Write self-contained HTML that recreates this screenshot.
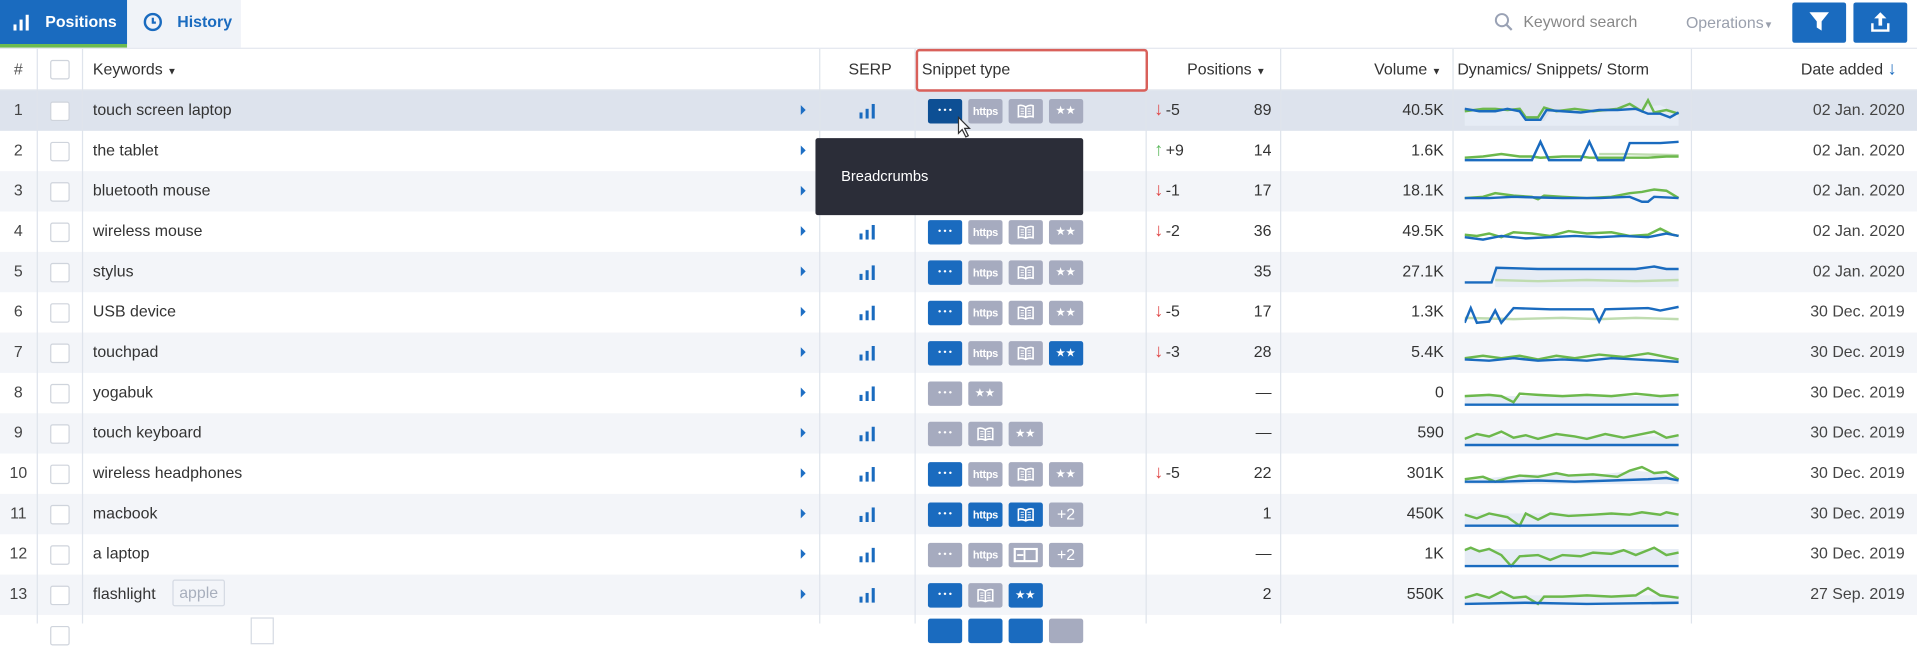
<!DOCTYPE html>
<html><head><meta charset="utf-8"><style>
html,body{margin:0;padding:0;width:1917px;height:623px;overflow:hidden;background:#fff;font-family:"Liberation Sans",Arial,sans-serif}
#w{position:absolute;left:0;top:0;width:1568px;height:510px;transform:scale(1.22258);transform-origin:0 0;color:#333;font-size:13px}
.a{position:absolute}
.vl{position:absolute;top:40px;width:1px;height:470px;background:#dfe4ec}
.r{position:absolute;left:0;width:1568px;height:33px}
.r.g{background:#f3f5f9}
.r.s{background:#dde3ed}
.c{position:absolute;top:0;height:33px;line-height:32px;white-space:nowrap}
.num{left:0;width:30px;text-align:center;color:#444}
.cb{position:absolute;left:41px;top:9px;width:14px;height:14px;border:1px solid #cfd4dc;border-radius:2px;background:#fff}
.kw{left:76px;color:#333}
.tri{position:absolute;left:655px;top:12px;width:0;height:0;border-left:4px solid #1e6fc4;border-top:4px solid transparent;border-bottom:4px solid transparent}
.serp{position:absolute;left:703px;top:11px}
.b{position:absolute;top:7px;width:28px;height:20px;border-radius:2px;background:#a6abbf;color:#fff;text-align:center;line-height:20px;font-weight:bold;font-size:9px}
.b.u{background:#1a6bbf}
.b.d{background:#0d4f94}
.dt{letter-spacing:0px;font-size:7px}
.hs{font-size:9px;letter-spacing:-0.3px}
.st{font-size:8px;letter-spacing:1px}
.p2{font-size:13px;font-weight:normal}
.bk svg{margin-top:4px}
.chg{left:944px}
.arr{display:inline-block;font-size:15px;margin-right:2px}
.dn{color:#e04848}
.up{color:#5cb85c}
.pos{left:950px;width:90px;text-align:right}
.vol{left:1050px;width:131px;text-align:right}
.date{left:1390px;width:168px;text-align:right;color:#444}
.sp{position:absolute;left:1198px;top:5px}
.h{position:absolute;top:40px;height:34px;line-height:34px;font-size:13px;color:#333}
</style></head><body><div id="w">
<svg width="0" height="0" style="position:absolute"><defs><symbol id="bk" viewBox="0 0 14 12"><path d="M7,2.5 Q4,0.5 1,1.5 V10.5 Q4,9.5 7,11 Q10,9.5 13,10.5 V1.5 Q10,0.5 7,2.5Z M7,2.5 V11" fill="none" stroke="#fff" stroke-width="1.3"/><path d="M2.8,4 H5.5 M2.8,6 H5.5 M2.8,8 H5.5 M8.5,4 H11.2 M8.5,6 H11.2 M8.5,8 H11.2" stroke="#fff" stroke-width="0.8"/></symbol></defs></svg>

<!-- top bar -->
<div class="a" style="left:0;top:0;width:104px;height:36px;background:#1a6bbf"></div>
<div class="a" style="left:0;top:36px;width:104px;height:3px;background:#6dbb4f"></div>
<svg class="a" style="left:11px;top:12px" width="14" height="13"><rect x="0" y="8" width="2.5" height="5" fill="#fff"/><rect x="5" y="4" width="2.5" height="9" fill="#fff"/><rect x="10" y="0" width="2.5" height="13" fill="#fff"/></svg>
<div class="a" style="left:37px;top:10px;color:#fff;font-weight:bold;font-size:13px">Positions</div>
<div class="a" style="left:104px;top:0;width:93px;height:39px;background:#f0f3f8"></div>
<svg class="a" style="left:117px;top:10px" width="16" height="16"><circle cx="8" cy="8" r="6.5" fill="none" stroke="#1a6bbf" stroke-width="2"/><path d="M8 4.5V8.5H10.5" fill="none" stroke="#1a6bbf" stroke-width="1.8"/></svg>
<div class="a" style="left:145px;top:10px;color:#1a6bbf;font-weight:bold;font-size:13px">History</div>
<div class="a" style="left:0;top:39px;width:1568px;height:1px;background:#e3e7ee"></div>
<svg class="a" style="left:1222px;top:10px" width="16" height="16"><circle cx="6.5" cy="6.5" r="5" fill="none" stroke="#9aa2b5" stroke-width="1.6"/><path d="M10 10L14.5 14.5" stroke="#9aa2b5" stroke-width="1.8"/></svg>
<div class="a" style="left:1246px;top:10px;color:#888;font-size:13px">Keyword search</div>
<div class="a" style="left:1379px;top:11px;color:#9aa0ad;font-size:13px">Operations<span style="font-size:8px">▼</span></div>
<div class="a" style="left:1466px;top:2px;width:44px;height:33px;background:#1a6bbf;border-radius:2px"></div>
<svg class="a" style="left:1479px;top:9px" width="18" height="18"><path d="M1 1H17L11 8.5V16L7 13.5V8.5Z" fill="#fff"/></svg>
<div class="a" style="left:1516px;top:2px;width:44px;height:33px;background:#1a6bbf;border-radius:2px"></div>
<svg class="a" style="left:1530px;top:9px" width="16" height="18"><path d="M8 1L3 6H6.5V12H9.5V6H13Z" fill="#fff"/><path d="M1.5 10V16H14.5V10" fill="none" stroke="#fff" stroke-width="2"/></svg>

<!-- header -->
<div class="h" style="left:0;width:30px;text-align:center;color:#555">#</div>
<div class="cb" style="top:49px"></div>
<div class="h" style="left:76px">Keywords <span style="font-size:8px">▼</span></div>
<div class="h" style="left:694px">SERP</div>
<div class="h" style="left:754px">Snippet type</div>
<div class="h" style="left:971px">Positions <span style="font-size:8px">▼</span></div>
<div class="h" style="left:1124px">Volume <span style="font-size:8px">▼</span></div>
<div class="h" style="left:1192px">Dynamics/ Snippets/ Storm</div>
<div class="h" style="left:1473px">Date added <span style="color:#1a6bbf;font-size:15px">↓</span></div>
<div class="a" style="left:0;top:73px;width:1568px;height:1px;background:#e3e7ee"></div>

<!-- rows -->
<div class="r s" style="top:74px"><div class="c num">1</div><div class="cb"></div><div class="c kw">touch screen laptop</div><div class="tri"></div><svg class="serp" width="14" height="12"><rect x="0" y="7" width="2.5" height="5" fill="#1a6bbf"/><rect x="5" y="4" width="2.5" height="8" fill="#1a6bbf"/><rect x="10" y="0" width="2.5" height="12" fill="#1a6bbf"/></svg>
<div class="b d dt" style="left:759px">• • •</div><div class="b hs" style="left:792px">https</div><div class="b bk" style="left:825px"><svg width="14" height="12"><use href="#bk"/></svg></div><div class="b st" style="left:858px">★★</div>
<div class="c chg"><span class="arr dn">↓</span>-5</div><div class="c pos">89</div><div class="c vol">40.5K</div>
<svg class="sp" width="176" height="24"><path d="M0,10 L10,12 20,12 30,10 40,11 50,15 55,20 65,20 70,12 80,11 90,13 100,12 115,13 130,10 140,12 150,8 160,7 170,12 175,14 L175,24 0,24Z" fill="#e6ecf5"/><polyline points="0,12 15,10 25,10 35,11 45,10 50,17 60,17 65,9 75,12 90,10 105,12 125,10 135,6 145,12 150,3 155,13 165,11 175,14" fill="none" stroke="#6cb84c" stroke-width="2"/><polyline points="0,10 12,12 25,12 35,10 45,12 50,19 62,19 67,11 80,12 95,13 110,11 125,11 140,10 150,14 160,14 168,17 175,13" fill="none" stroke="#1a6bbf" stroke-width="2"/></svg>
<div class="c date">02 Jan. 2020</div></div>

<div class="r" style="top:107px"><div class="c num">2</div><div class="cb"></div><div class="c kw">the tablet</div><div class="tri"></div>
<div class="c chg"><span class="arr up">↑</span>+9</div><div class="c pos">14</div><div class="c vol">1.6K</div>
<svg class="sp" width="176" height="24"><polyline points="110,14 130,14 175,15" fill="none" stroke="#bfdcb0" stroke-width="2"/><polyline points="0,17 15,16 30,14 45,16 55,16 62,17 80,16 95,16 102,17 120,17 140,17 150,17 165,16 175,16" fill="none" stroke="#6cb84c" stroke-width="2"/><polyline points="0,19 55,19 62,4 69,19 95,19 102,4 109,19 130,19 135,5 160,5 175,4" fill="none" stroke="#1a6bbf" stroke-width="2"/></svg>
<div class="c date">02 Jan. 2020</div></div>

<div class="r g" style="top:140px"><div class="c num">3</div><div class="cb"></div><div class="c kw">bluetooth mouse</div><div class="tri"></div>
<div class="c chg"><span class="arr dn">↓</span>-1</div><div class="c pos">17</div><div class="c vol">18.1K</div>
<svg class="sp" width="176" height="24"><polyline points="0,17 15,16 25,13 40,15 55,16 60,18 65,15 80,16 100,17 120,16 135,13 145,12 155,10 165,11 175,17" fill="none" stroke="#6cb84c" stroke-width="2"/><polyline points="0,17 20,17 40,16 80,17 110,17 135,16 145,20 150,20 155,16 175,17" fill="none" stroke="#1a6bbf" stroke-width="2"/></svg>
<div class="c date">02 Jan. 2020</div></div>

<div class="r" style="top:173px"><div class="c num">4</div><div class="cb"></div><div class="c kw">wireless mouse</div><div class="tri"></div><svg class="serp" width="14" height="12"><rect x="0" y="7" width="2.5" height="5" fill="#1a6bbf"/><rect x="5" y="4" width="2.5" height="8" fill="#1a6bbf"/><rect x="10" y="0" width="2.5" height="12" fill="#1a6bbf"/></svg>
<div class="b u dt" style="left:759px">• • •</div><div class="b hs" style="left:792px">https</div><div class="b bk" style="left:825px"><svg width="14" height="12"><use href="#bk"/></svg></div><div class="b st" style="left:858px">★★</div>
<div class="c chg"><span class="arr dn">↓</span>-2</div><div class="c pos">36</div><div class="c vol">49.5K</div>
<svg class="sp" width="176" height="24"><polyline points="0,14 10,15 20,13 30,16 40,12 55,13 70,15 85,11 100,13 120,12 135,15 150,14 160,9 170,14 175,15" fill="none" stroke="#6cb84c" stroke-width="2"/><polyline points="0,16 15,18 30,15 50,17 70,16 90,15 110,16 130,15 150,16 165,13 175,15" fill="none" stroke="#1a6bbf" stroke-width="2"/></svg>
<div class="c date">02 Jan. 2020</div></div>

<div class="r g" style="top:206px"><div class="c num">5</div><div class="cb"></div><div class="c kw">stylus</div><div class="tri"></div><svg class="serp" width="14" height="12"><rect x="0" y="7" width="2.5" height="5" fill="#1a6bbf"/><rect x="5" y="4" width="2.5" height="8" fill="#1a6bbf"/><rect x="10" y="0" width="2.5" height="12" fill="#1a6bbf"/></svg>
<div class="b u dt" style="left:759px">• • •</div><div class="b hs" style="left:792px">https</div><div class="b bk" style="left:825px"><svg width="14" height="12"><use href="#bk"/></svg></div><div class="b st" style="left:858px">★★</div>
<div class="c pos">35</div><div class="c vol">27.1K</div>
<svg class="sp" width="176" height="24"><path d="M25,8 L175,9 175,24 25,24Z" fill="#e6ecf5"/><polyline points="25,18 60,19 100,18 140,19 175,18" fill="none" stroke="#bfdcb0" stroke-width="2"/><polyline points="0,20 22,20 26,8 60,9 100,9 140,9 155,7 165,9 175,9" fill="none" stroke="#1a6bbf" stroke-width="2"/></svg>
<div class="c date">02 Jan. 2020</div></div>

<div class="r" style="top:239px"><div class="c num">6</div><div class="cb"></div><div class="c kw">USB device</div><div class="tri"></div><svg class="serp" width="14" height="12"><rect x="0" y="7" width="2.5" height="5" fill="#1a6bbf"/><rect x="5" y="4" width="2.5" height="8" fill="#1a6bbf"/><rect x="10" y="0" width="2.5" height="12" fill="#1a6bbf"/></svg>
<div class="b u dt" style="left:759px">• • •</div><div class="b hs" style="left:792px">https</div><div class="b bk" style="left:825px"><svg width="14" height="12"><use href="#bk"/></svg></div><div class="b st" style="left:858px">★★</div>
<div class="c chg"><span class="arr dn">↓</span>-5</div><div class="c pos">17</div><div class="c vol">1.3K</div>
<svg class="sp" width="176" height="24"><polyline points="0,16 40,17 80,16 110,17 140,16 175,17" fill="none" stroke="#bfdcb0" stroke-width="2"/><polyline points="0,20 5,8 10,20 20,19 25,10 30,20 40,8 70,9 105,9 110,19 115,9 150,8 160,10 175,7" fill="none" stroke="#1a6bbf" stroke-width="2"/></svg>
<div class="c date">30 Dec. 2019</div></div>

<div class="r g" style="top:272px"><div class="c num">7</div><div class="cb"></div><div class="c kw">touchpad</div><div class="tri"></div><svg class="serp" width="14" height="12"><rect x="0" y="7" width="2.5" height="5" fill="#1a6bbf"/><rect x="5" y="4" width="2.5" height="8" fill="#1a6bbf"/><rect x="10" y="0" width="2.5" height="12" fill="#1a6bbf"/></svg>
<div class="b u dt" style="left:759px">• • •</div><div class="b hs" style="left:792px">https</div><div class="b bk" style="left:825px"><svg width="14" height="12"><use href="#bk"/></svg></div><div class="b u st" style="left:858px">★★</div>
<div class="c chg"><span class="arr dn">↓</span>-3</div><div class="c pos">28</div><div class="c vol">5.4K</div>
<svg class="sp" width="176" height="24"><polyline points="0,16 15,14 30,16 45,14 60,17 75,14 90,16 110,13 130,15 150,12 165,15 175,17" fill="none" stroke="#6cb84c" stroke-width="2"/><polyline points="0,17 20,18 40,16 60,18 80,17 100,18 120,16 140,17 160,18 175,19" fill="none" stroke="#1a6bbf" stroke-width="2"/></svg>
<div class="c date">30 Dec. 2019</div></div>

<div class="r" style="top:305px"><div class="c num">8</div><div class="cb"></div><div class="c kw">yogabuk</div><div class="tri"></div><svg class="serp" width="14" height="12"><rect x="0" y="7" width="2.5" height="5" fill="#1a6bbf"/><rect x="5" y="4" width="2.5" height="8" fill="#1a6bbf"/><rect x="10" y="0" width="2.5" height="12" fill="#1a6bbf"/></svg>
<div class="b dt" style="left:759px">• • •</div><div class="b st" style="left:792px">★★</div>
<div class="c pos">—</div><div class="c vol">0</div>
<svg class="sp" width="176" height="24"><path d="M0,14 L175,14 175,21 0,21Z" fill="#e6ecf5"/><polyline points="0,14 20,13 30,14 40,19 45,12 60,13 80,14 100,13 120,14 140,12 160,14 175,13" fill="none" stroke="#6cb84c" stroke-width="2"/><line x1="0" y1="21" x2="175" y2="21" stroke="#1a6bbf" stroke-width="2"/></svg>
<div class="c date">30 Dec. 2019</div></div>

<div class="r g" style="top:338px"><div class="c num">9</div><div class="cb"></div><div class="c kw">touch keyboard</div><div class="tri"></div><svg class="serp" width="14" height="12"><rect x="0" y="7" width="2.5" height="5" fill="#1a6bbf"/><rect x="5" y="4" width="2.5" height="8" fill="#1a6bbf"/><rect x="10" y="0" width="2.5" height="12" fill="#1a6bbf"/></svg>
<div class="b dt" style="left:759px">• • •</div><div class="b bk" style="left:792px"><svg width="14" height="12"><use href="#bk"/></svg></div><div class="b st" style="left:825px">★★</div>
<div class="c pos">—</div><div class="c vol">590</div>
<svg class="sp" width="176" height="24"><path d="M0,14 L175,14 175,21 0,21Z" fill="#e6ecf5"/><polyline points="0,16 10,12 20,14 30,10 40,15 50,13 60,16 75,12 90,14 100,16 115,12 130,15 145,12 155,10 165,15 175,13" fill="none" stroke="#6cb84c" stroke-width="2"/><line x1="0" y1="21" x2="175" y2="21" stroke="#1a6bbf" stroke-width="2"/></svg>
<div class="c date">30 Dec. 2019</div></div>

<div class="r" style="top:371px"><div class="c num">10</div><div class="cb"></div><div class="c kw">wireless headphones</div><div class="tri"></div><svg class="serp" width="14" height="12"><rect x="0" y="7" width="2.5" height="5" fill="#1a6bbf"/><rect x="5" y="4" width="2.5" height="8" fill="#1a6bbf"/><rect x="10" y="0" width="2.5" height="12" fill="#1a6bbf"/></svg>
<div class="b u dt" style="left:759px">• • •</div><div class="b hs" style="left:792px">https</div><div class="b bk" style="left:825px"><svg width="14" height="12"><use href="#bk"/></svg></div><div class="b st" style="left:858px">★★</div>
<div class="c chg"><span class="arr dn">↓</span>-5</div><div class="c pos">22</div><div class="c vol">301K</div>
<svg class="sp" width="176" height="24"><path d="M0,17 L30,14 50,12 80,12 110,12 140,9 160,11 175,16 175,20 0,20Z" fill="#e6ecf5"/><polyline points="0,16 15,14 25,18 35,15 45,13 60,14 75,11 85,13 105,12 125,14 135,9 145,6 155,11 165,10 175,16" fill="none" stroke="#6cb84c" stroke-width="2"/><polyline points="0,18 30,18 60,17 90,18 120,17 150,16 165,15 175,17" fill="none" stroke="#1a6bbf" stroke-width="2"/></svg>
<div class="c date">30 Dec. 2019</div></div>

<div class="r g" style="top:404px"><div class="c num">11</div><div class="cb"></div><div class="c kw">macbook</div><div class="tri"></div><svg class="serp" width="14" height="12"><rect x="0" y="7" width="2.5" height="5" fill="#1a6bbf"/><rect x="5" y="4" width="2.5" height="8" fill="#1a6bbf"/><rect x="10" y="0" width="2.5" height="12" fill="#1a6bbf"/></svg>
<div class="b u dt" style="left:759px">• • •</div><div class="b u hs" style="left:792px">https</div><div class="b u bk" style="left:825px"><svg width="14" height="12"><use href="#bk"/></svg></div><div class="b p2" style="left:858px">+2</div>
<div class="c pos">1</div><div class="c vol">450K</div>
<svg class="sp" width="176" height="24"><path d="M0,11 L175,11 175,21 0,21Z" fill="#e6ecf5"/><polyline points="0,12 10,15 20,11 35,14 45,21 50,11 60,16 70,11 85,13 105,12 120,11 135,12 145,10 160,12 165,10 175,12" fill="none" stroke="#6cb84c" stroke-width="2"/><line x1="0" y1="21" x2="175" y2="21" stroke="#1a6bbf" stroke-width="2"/></svg>
<div class="c date">30 Dec. 2019</div></div>

<div class="r" style="top:437px"><div class="c num">12</div><div class="cb"></div><div class="c kw">a laptop</div><div class="tri"></div><svg class="serp" width="14" height="12"><rect x="0" y="7" width="2.5" height="5" fill="#1a6bbf"/><rect x="5" y="4" width="2.5" height="8" fill="#1a6bbf"/><rect x="10" y="0" width="2.5" height="12" fill="#1a6bbf"/></svg>
<div class="b dt" style="left:759px">• • •</div><div class="b hs" style="left:792px">https</div><div class="b" style="left:825px"><svg width="20" height="12" style="margin-top:4px"><rect x="1" y="1" width="18" height="10" fill="none" stroke="#fff" stroke-width="1.8"/><line x1="9" y1="1" x2="9" y2="11" stroke="#fff" stroke-width="1.5"/><line x1="3" y1="6" x2="8" y2="6" stroke="#fff" stroke-width="1.5"/></svg></div><div class="b p2" style="left:858px">+2</div>
<div class="c pos">—</div><div class="c vol">1K</div>
<svg class="sp" width="176" height="24"><path d="M0,7 L175,7 175,21 0,21Z" fill="#e6ecf5"/><polyline points="0,8 5,6 12,9 20,7 30,12 38,21 45,13 60,12 70,16 80,12 95,13 105,10 120,11 130,8 140,12 155,6 165,12 175,10" fill="none" stroke="#6cb84c" stroke-width="2"/><line x1="0" y1="21" x2="175" y2="21" stroke="#1a6bbf" stroke-width="2"/></svg>
<div class="c date">30 Dec. 2019</div></div>

<div class="r g" style="top:470px"><div class="c num">13</div><div class="cb"></div><div class="c kw">flashlight</div><div class="a" style="left:141px;top:4px;width:41px;height:20px;border:1px solid #d5dae3;border-radius:2px;color:#a8afbd;text-align:center;line-height:19px">apple</div><div class="tri"></div><svg class="serp" width="14" height="12"><rect x="0" y="7" width="2.5" height="5" fill="#1a6bbf"/><rect x="5" y="4" width="2.5" height="8" fill="#1a6bbf"/><rect x="10" y="0" width="2.5" height="12" fill="#1a6bbf"/></svg>
<div class="b u dt" style="left:759px">• • •</div><div class="b bk" style="left:792px"><svg width="14" height="12"><use href="#bk"/></svg></div><div class="b u st" style="left:825px">★★</div>
<div class="c pos">2</div><div class="c vol">550K</div>
<svg class="sp" width="176" height="24"><path d="M0,12 L175,12 175,20 0,20Z" fill="#e6ecf5"/><polyline points="0,14 10,11 20,14 30,9 40,14 50,13 60,19 65,13 80,13 100,12 120,13 140,12 150,6 160,12 175,14" fill="none" stroke="#6cb84c" stroke-width="2"/><polyline points="0,19 50,18 100,19 175,18" fill="none" stroke="#1a6bbf" stroke-width="2"/></svg>
<div class="c date">27 Sep. 2019</div></div>

<div class="r" style="top:503px"><div class="cb" style="top:9px"></div><div class="a" style="left:205px;top:2px;width:17px;height:20px;border:1px solid #d5dae3"></div>
<div class="b u" style="left:759px;top:3px"></div><div class="b u" style="left:792px;top:3px"></div><div class="b u" style="left:825px;top:3px"></div><div class="b" style="left:858px;top:3px"></div></div>

<!-- vertical grid lines -->
<div class="vl" style="left:30px"></div><div class="vl" style="left:67px"></div><div class="vl" style="left:670px"></div><div class="vl" style="left:748px"></div><div class="vl" style="left:937px"></div><div class="vl" style="left:1047px"></div><div class="vl" style="left:1188px"></div><div class="vl" style="left:1383px"></div>

<!-- highlight -->
<div class="a" style="left:749px;top:40px;width:186px;height:31px;border:2px solid #d9605a;border-radius:3px"></div>

<!-- tooltip -->
<div class="a" style="left:667px;top:113px;width:219px;height:63px;background:#2b2d38;border-radius:2px"></div>
<div class="a" style="left:688px;top:137px;color:#fff;font-size:12px">Breadcrumbs</div>
<svg class="a" style="left:783px;top:95px" width="12" height="18"><path d="M1,1 L1,14 4,11 7,17 9,16 6,10 10,10Z" fill="#fff" stroke="#333" stroke-width="1"/></svg>
</div></body></html>
